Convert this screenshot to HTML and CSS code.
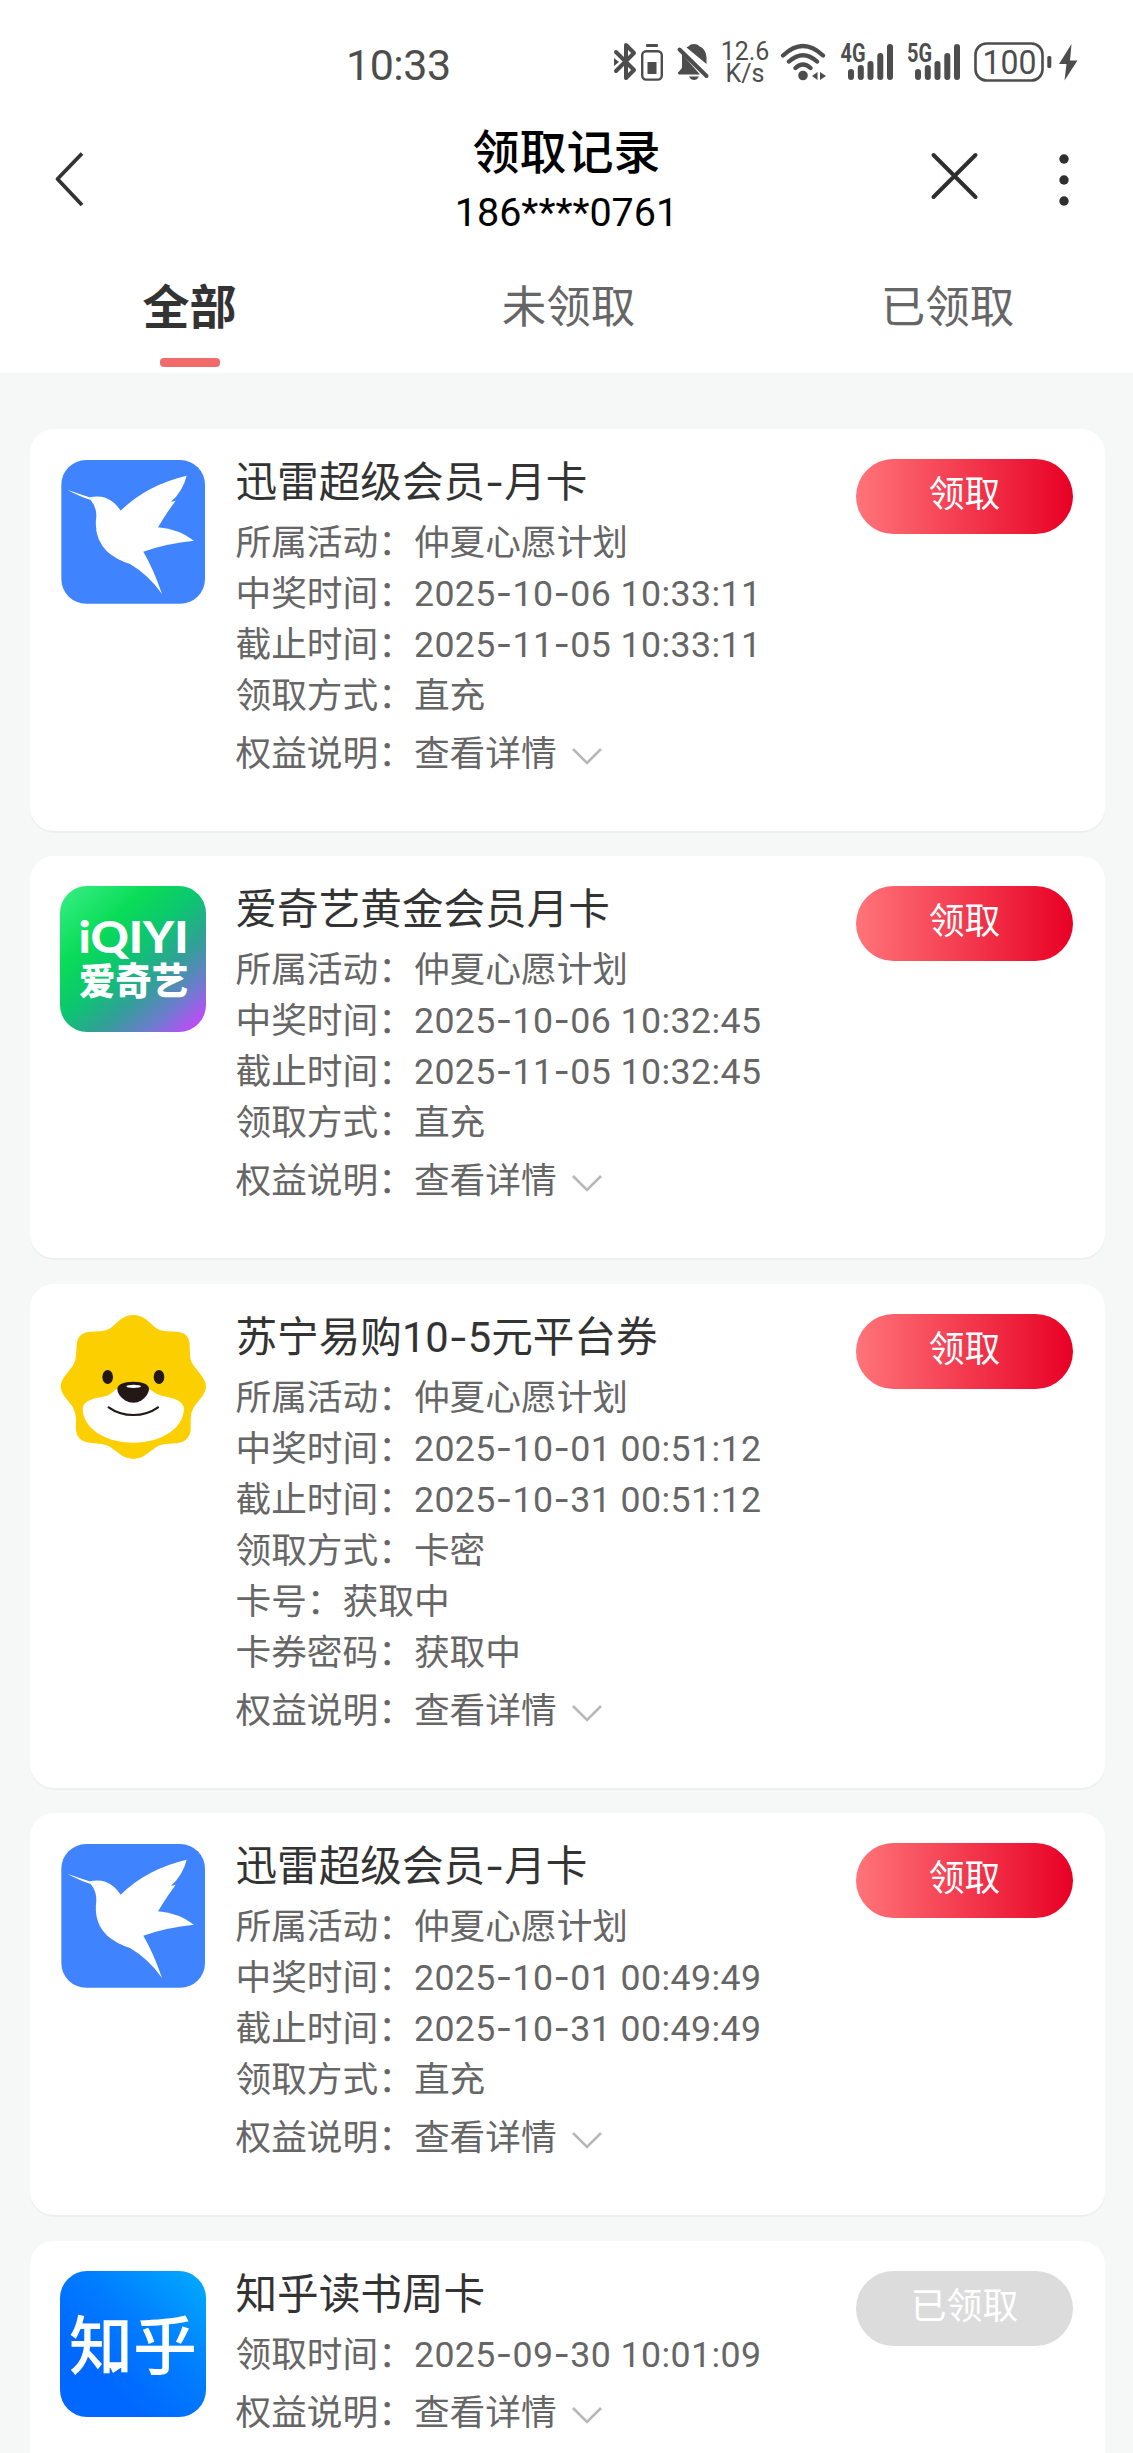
FILE: index.html
```html
<!DOCTYPE html>
<html lang="zh-CN">
<head>
<meta charset="utf-8">
<title>领取记录</title>
<link rel="stylesheet" href="styles.css">
</head>
<body>
<svg class="defs" width="0" height="0" aria-hidden="true">
  <symbol id="xunlei" viewBox="0 0 146 146">
    <g transform="translate(-40 -49) scale(.33333)">
      <rect x="124" y="150" width="431" height="431" rx="74" fill="#4083ff"/>
      <path fill="#fff" d="M143 240L208 262Q235 256 256 263Q284 274 302 302Q380 225 500 197Q488 245 452 276L467 272Q440 308 414 352Q478 358 522 392Q440 400 370 425Q402 480 426 552Q385 494 330 462Q288 448 262 425Q220 385 229 320Q230 292 212 270Q180 260 143 240Z"/>
    </g>
  </symbol>
  <symbol id="down" viewBox="0 0 32 18">
    <path d="M2 2L16 16L30 2" fill="none" stroke="#b8b8b8" stroke-width="2.6"/>
  </symbol>
</svg>

<header class="top">
  <div class="status">
    <span class="clock">10:33</span>
    <div class="status-icons">
      <svg width="26" height="44" viewBox="612 40 26 44" fill="none" stroke="#4d4d4d" stroke-width="4" stroke-linejoin="round" stroke-linecap="round"><path d="M616 52L634 70L626 78V45L634 53L616 71"/><path d="M614 58V66L619 62Z" fill="#4d4d4d" stroke="none"/></svg>
      <svg width="32" height="44" viewBox="638 40 32 44"><rect x="646" y="44" width="12" height="3" rx="1" fill="#4d4d4d"/><rect x="642.2" y="51.2" width="19.6" height="28.4" rx="4" fill="none" stroke="#4d4d4d" stroke-width="2.4"/><rect x="647.5" y="62" width="9" height="12" fill="#4d4d4d"/></svg>
      <svg width="46" height="44" viewBox="670 40 46 44" fill="#4d4d4d"><path d="M689 46Q690 44 694 44Q698 44 699 46Q706 49 706.500 57V64L686.500 47.500Z"/><path d="M682 54L700 74.500H679Q676.500 73 679 71.500L682 68Z"/><path d="M689 76.500H699Q697 80 694 80Q691 80 689 76.500Z"/><path d="M679.500 49.500L706.500 76" stroke="#4d4d4d" stroke-width="4" stroke-linecap="round"/></svg>
      <div class="speed"><span>12.6</span><span>K/s</span></div>
      <svg width="58" height="44" viewBox="774 40 58 44" fill="none" stroke="#4d4d4d" stroke-width="4.300" stroke-linecap="round"><path d="M783 55.500Q803 36.500 823 55.500M789 61.500Q803 49 817 61.500M795.500 68Q803 61 810.500 68"/><circle cx="803" cy="75.500" r="4.800" fill="#4d4d4d" stroke="none"/><path d="M812 76L817.500 72V80ZM820 72V80L826 76Z" fill="#4d4d4d" stroke="none"/></svg>
      <svg width="68" height="44" viewBox="832 40 68 44"><text class="net" x="840.500" y="61.500" textLength="25" lengthAdjust="spacingAndGlyphs">4G</text><path class="bars" d="M851 72V77M860.800 68V77M870.500 64V77M880.300 56V77M890 47V77"/></svg>
      <svg width="66" height="44" viewBox="900 40 66 44"><text class="net" x="907" y="61.500" textLength="25" lengthAdjust="spacingAndGlyphs">5G</text><path class="bars" d="M918 72V77M927.800 68V77M937.500 64V77M947.300 56V77M957 47V77"/></svg>
      <svg width="89" height="44" viewBox="966 40 89 44"><rect x="975.500" y="43.500" width="67" height="37" rx="11" fill="none" stroke="#4d4d4d" stroke-width="2.600"/><text class="level" x="982.500" y="73.800" textLength="54" lengthAdjust="spacingAndGlyphs">100</text><rect x="1047.300" y="56" width="4" height="12" rx="1.500" fill="#4d4d4d"/></svg>
      <svg width="25" height="44" viewBox="1055 40 25 44"><path d="M1071.500 44L1059 64H1066.500L1064.500 80.500L1077.500 60.500H1070Z" fill="#4d4d4d"/></svg>
    </div>
  </div>
  <div class="nav">
    <svg class="back" width="34" height="60" viewBox="53 149 34 60"><path d="M82 153.500L57.500 179L82 205" fill="none" stroke="#333" stroke-width="3.800" stroke-linejoin="round"/></svg>
    <div class="heading">
      <h1>领取记录</h1>
      <p>186****0761</p>
    </div>
    <div class="actions">
      <svg width="50" height="50" viewBox="929 151 50 50"><path d="M933.500 155L975.500 197M975.500 155L933.500 197" stroke="#2f2f2f" stroke-width="4" stroke-linecap="round"/></svg>
      <svg width="12" height="54" viewBox="0 0 12 54" fill="#2f2f2f"><circle cx="6" cy="6" r="4.700"/><circle cx="6" cy="27" r="4.700"/><circle cx="6" cy="48" r="4.700"/></svg>
    </div>
  </div>
  <nav class="tabs">
    <a class="tab active">全部</a>
    <a class="tab">未领取</a>
    <a class="tab">已领取</a>
  </nav>
</header>

<main class="list">
  <article class="card">
    <svg class="logo"><use href="#xunlei"/></svg>
    <div class="info">
      <h2>迅雷超级会员<i>-</i>月卡</h2>
      <p>所属活动：仲夏心愿计划</p>
      <p>中奖时间：<time>2025<i>-</i>10<i>-</i>06 10:33:11</time></p>
      <p>截止时间：<time>2025<i>-</i>11<i>-</i>05 10:33:11</time></p>
      <p>领取方式：直充</p>
      <p class="more">权益说明：查看详情<svg class="down"><use href="#down"/></svg></p>
    </div>
    <button class="claim">领取</button>
  </article>

  <article class="card">
    <svg class="logo" viewBox="0 0 146 146">
      <defs><linearGradient id="iq" x1="0.05" y1="0" x2="0.95" y2="1"><stop offset="0" stop-color="#35ee83"/><stop offset=".28" stop-color="#0adc57"/><stop offset=".48" stop-color="#0cc571"/><stop offset=".66" stop-color="#329f98"/><stop offset=".82" stop-color="#6c7cce"/><stop offset="1" stop-color="#d040ff"/></linearGradient></defs>
      <rect width="146" height="146" rx="27" fill="url(#iq)"/>
      <text class="iq-latin" x="18.500" y="67" textLength="110" lengthAdjust="spacingAndGlyphs">iQIYI</text>
      <text class="iq-han" x="19" y="109" textLength="109" lengthAdjust="spacingAndGlyphs">爱奇艺</text>
    </svg>
    <div class="info">
      <h2>爱奇艺黄金会员月卡</h2>
      <p>所属活动：仲夏心愿计划</p>
      <p>中奖时间：<time>2025<i>-</i>10<i>-</i>06 10:32:45</time></p>
      <p>截止时间：<time>2025<i>-</i>11<i>-</i>05 10:32:45</time></p>
      <p>领取方式：直充</p>
      <p class="more">权益说明：查看详情<svg class="down"><use href="#down"/></svg></p>
    </div>
    <button class="claim">领取</button>
  </article>

  <article class="card">
    <svg class="logo" viewBox="0 0 146 146">
      <g transform="translate(-20 -24) scale(.33333)">
        <path fill="#fcd000" d="M280 75Q300 75 318 88L345 112Q358 123 378 124L410 125Q448 128 449 165L450 195Q450 212 462 228L488 262Q498 275 498 290Q498 300 488 317L462 350Q452 368 452 385V420Q448 455 410 460L375 462Q355 465 340 478L312 498Q298 507 280 507Q262 507 248 498L220 478Q205 465 185 462L150 458Q112 455 108 420V385Q107 368 98 350L72 317Q62 300 62 290Q62 275 72 262L98 228Q108 212 108 195L110 165Q112 128 150 125L182 124Q202 123 215 112L242 88Q260 75 280 75Z"/>
        <path fill="#fff" d="M280 290L333 300Q350 316 378 320Q432 330 432 358C430 412 370 458 280 458C190 458 130 412 128 358Q128 330 182 322Q212 318 227 298Z"/>
        <path fill="#231815" d="M232 297Q233 276 280 275Q326 276 327 297Q326 315 305 331Q280 346 255 331Q232 315 232 297Z"/>
        <ellipse cx="281" cy="289" rx="22" ry="5" fill="#fff"/>
        <ellipse cx="203" cy="261" rx="16" ry="21" fill="#231815"/>
        <ellipse cx="357" cy="261" rx="16" ry="21" fill="#231815"/>
        <path d="M206 352Q238 375 280 375Q322 375 354 352" fill="none" stroke="#231815" stroke-width="6.500" stroke-linecap="round"/>
      </g>
    </svg>
    <div class="info">
      <h2>苏宁易购10<i>-</i>5元平台券</h2>
      <p>所属活动：仲夏心愿计划</p>
      <p>中奖时间：<time>2025<i>-</i>10<i>-</i>01 00:51:12</time></p>
      <p>截止时间：<time>2025<i>-</i>10<i>-</i>31 00:51:12</time></p>
      <p>领取方式：卡密</p>
      <p>卡号：获取中</p>
      <p>卡券密码：获取中</p>
      <p class="more">权益说明：查看详情<svg class="down"><use href="#down"/></svg></p>
    </div>
    <button class="claim">领取</button>
  </article>

  <article class="card">
    <svg class="logo"><use href="#xunlei"/></svg>
    <div class="info">
      <h2>迅雷超级会员<i>-</i>月卡</h2>
      <p>所属活动：仲夏心愿计划</p>
      <p>中奖时间：<time>2025<i>-</i>10<i>-</i>01 00:49:49</time></p>
      <p>截止时间：<time>2025<i>-</i>10<i>-</i>31 00:49:49</time></p>
      <p>领取方式：直充</p>
      <p class="more">权益说明：查看详情<svg class="down"><use href="#down"/></svg></p>
    </div>
    <button class="claim">领取</button>
  </article>

  <article class="card">
    <svg class="logo" viewBox="0 0 146 146">
      <defs><linearGradient id="zh" x1=".3" y1=".75" x2="1" y2="0"><stop offset="0" stop-color="#0068ff"/><stop offset=".45" stop-color="#017dff"/><stop offset="1" stop-color="#00adff"/></linearGradient></defs>
      <rect width="146" height="146" rx="27" fill="url(#zh)"/>
      <text class="zh" x="9" y="98" textLength="128" lengthAdjust="spacingAndGlyphs">知乎</text>
      <path d="M50 96H62L53 102Z" fill="#fff"/>
    </svg>
    <div class="info">
      <h2>知乎读书周卡</h2>
      <p>领取时间：<time>2025<i>-</i>09<i>-</i>30 10:01:09</time></p>
      <p class="more">权益说明：查看详情<svg class="down"><use href="#down"/></svg></p>
    </div>
    <button class="claim done">已领取</button>
  </article>
</main>
</body>
</html>
```
FILE: styles.css
```css
* { box-sizing: border-box; margin: 0; padding: 0; }

html, body { height: 2453px; overflow: hidden; }

body {
  width: 1133px;
  background: #f6f8f8;
  font-family: Roboto, "Noto Sans CJK SC", sans-serif;
  color: #333;
}

.defs { display: block; }
svg { flex: none; }

.top { height: 373px; background: #fff; }

/* status bar */
.status {
  display: flex;
  height: 110px;
  padding: 40px 0 0 346px;
  color: #4d4d4d;
}
.clock {
  width: 266px;
  font-size: 43px;
  line-height: 51px;
  letter-spacing: -.5px;
}
.status-icons { display: flex; height: 44px; }
.speed {
  display: flex;
  flex-direction: column;
  width: 58px;
  padding-top: 1px;
  font: 25px/22px Roboto, sans-serif;
  text-align: center;
}
.net { font: 700 25px Roboto, sans-serif; fill: #4d4d4d; }
.level { font: 400 33px Roboto, sans-serif; fill: #4d4d4d; }
.bars { fill: none; stroke: #4d4d4d; stroke-width: 6; stroke-linecap: round; }

/* title bar */
.nav {
  display: grid;
  grid-template-columns: 200px 1fr 200px;
  height: 140px;
}
.back { margin: 39px 0 0 53px; }
.heading { text-align: center; color: #000; }
.heading h1 {
  margin-top: 8px;
  font-size: 47px;
  line-height: 70px;
  font-weight: 500;
}
.heading p {
  margin-top: 1px;
  font-size: 39.500px;
  line-height: 48px;
}
.actions { display: flex; justify-content: flex-end; padding-right: 63px; }
.actions svg:first-child { margin: 41px 79.500px 0 0; }
.actions svg:last-child { margin-top: 42.500px; }

.tabs {
  display: grid;
  grid-template-columns: repeat(3, 379px);
  height: 123px;
}
.tab {
  display: flex;
  flex-direction: column;
  align-items: center;
  padding-top: 28px;
  font-size: 44.500px;
  line-height: 60px;
  color: #666;
}
.tab.active { font-size: 47px; font-weight: 700; color: #333; }
.tab.active::after {
  content: "";
  width: 60px;
  height: 9px;
  margin-top: 20px;
  border-radius: 4px;
  background: #f26b6b;
}

/* reward cards */
.list {
  display: flex;
  flex-direction: column;
  gap: 25.400px;
  padding: 56px 28px 0 30px;
}
.card {
  display: flex;
  align-items: flex-start;
  padding: 30px 32px 51px 30px;
  border-radius: 24px;
  background: #fff;
  box-shadow: 0 2px 1px rgba(0, 0, 0, .035);
}
.logo { width: 146px; height: 146px; }
.info { flex: 1; margin-left: 29.500px; white-space: nowrap; }
.info h2 {
  height: 45px;
  margin-bottom: 12px;
  font-size: 41.600px;
  line-height: 47px;
  font-weight: 400;
}
.info p { height: 51px; font-size: 35.700px; line-height: 55px; color: #666; }
.info p.more { display: flex; align-items: center; margin-top: 9px; }
.info time { letter-spacing: .4px; }
.info i { font-family: Inter, sans-serif; font-style: normal; line-height: 0; }
.down { width: 32px; height: 18px; margin-left: 14px; margin-top: 3px; }

.claim {
  width: 217px;
  height: 75px;
  padding-bottom: 2px;
  border: 0;
  border-radius: 38px;
  background: linear-gradient(90deg, #ff7479, #e80025);
  color: #fff;
  font: 35.800px/73px Roboto, "Noto Sans CJK SC", sans-serif;
}
.claim.done { background: #dcdcdc; }

/* lettering inside logos */
.iq-latin { font: 900 44px Lato, sans-serif; fill: #fff; }
.iq-han { font: 900 37px "Noto Sans CJK SC", sans-serif; fill: #fff; }
.zh { font: 500 64px "Noto Sans CJK SC", sans-serif; fill: #fff; }
```
